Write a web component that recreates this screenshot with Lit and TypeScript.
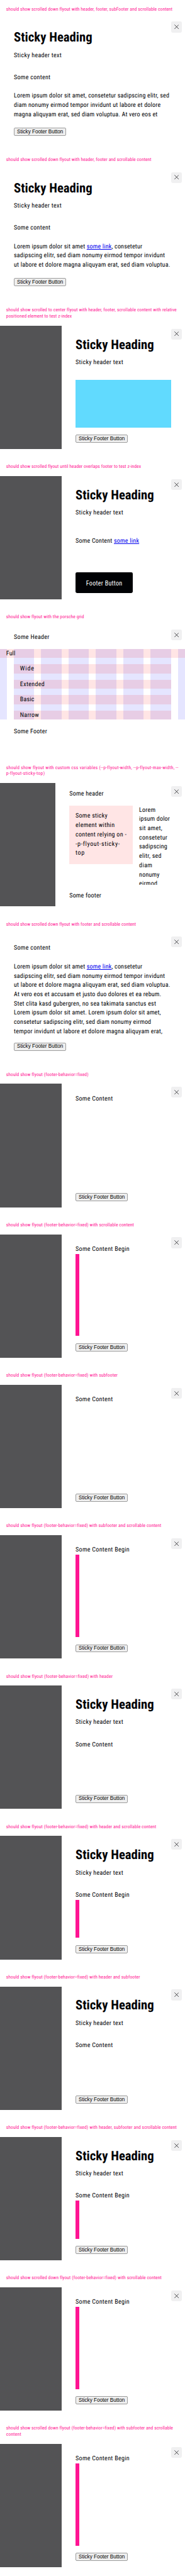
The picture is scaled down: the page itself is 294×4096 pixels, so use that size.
import { LitElement, html, css, svg, unsafeCSS, nothing, TemplateResult } from "lit";
import { customElement } from "lit/decorators.js";
import { classMap } from "lit/directives/class-map.js";

// Design units: the sheet is 480 units wide and 6678 units tall.
const SX = 294 / 480;
const SY = 4096 / 6678;
const x = (n: number) => unsafeCSS(`${(n * SX).toFixed(3)}px`);
const y = (n: number) => unsafeCSS(`${(n * SY).toFixed(3)}px`);

// One line of type, tracked out or in to the given width.
const line = (width: number, content: unknown) =>
  html`<div class="line"><span class="fit" data-w=${width}>${content}</span></div>`;

const link = html`<a class="link">some link</a>`;

interface Story {
  label: [number, string][];
  wide?: boolean;
  narrowBackdrop?: boolean;
  header?: TemplateResult;
  content: TemplateResult;
  footer?: TemplateResult;
}

const heading = html`<div class="header tall">
  <h2 class="heading"><span class="fit" data-w="202.5">Sticky Heading</span></h2>
  ${line(122.7, "Sticky header text")}
</div>`;
const stickyButton = html`<button class="native">Sticky Footer Button</button>`;
const someContent = line(95.5, "Some Content");
const longContent = html`${line(138.8, "Some Content Begin")}<div class="bar"></div>`;

const stories: Story[] = [
  {
    label: [[430, "should show scrolled down flyout with header, footer, subFooter and scrollable content"]],
    wide: true,
    header: heading,
    content: html`${line(93.7, "Some content")}
      <div class="para">
        ${line(402, "Lorem ipsum dolor sit amet, consetetur sadipscing elitr, sed")}
        ${line(379.7, "diam nonumy eirmod tempor invidunt ut labore et dolore")}
        ${line(371.7, "magna aliquyam erat, sed diam voluptua. At vero eos et")}
      </div>`,
  },
  {
    label: [[375.3, "should show scrolled down flyout with header, footer and scrollable content"]],
    wide: true,
    header: heading,
    content: html`${line(93.7, "Some content")}
      <div class="para">
        ${line(332, html`Lorem ipsum dolor sit amet ${link}, consetetur`)}
        ${line(390.7, "sadipscing elitr, sed diam nonumy eirmod tempor invidunt")}
        ${line(404.3, "ut labore et dolore magna aliquyam erat, sed diam voluptua.")}
      </div>`,
  },
  {
    label: [
      [440.5, "should show scrolled to center flyout with header, footer, scrollable content with relative"],
      [169.3, "positioned element to test z-index"],
    ],
    header: heading,
    content: html`<div class="blue"></div>`,
  },
  {
    label: [[348.3, "should show scrolled flyout until header overlaps footer to test z-index"]],
    header: heading,
    content: html`<div class="lowered">${line(163.7, html`Some Content ${link}`)}</div>`,
    footer: html`<div class="footer cta">
      <button class="black"><span class="fit" data-w="92.7">Footer Button</span></button>
    </div>`,
  },
  {
    label: [[200.3, "should show flyout with the porsche grid"]],
    wide: true,
    header: html`<div class="header low">${line(91, "Some Header")}</div>`,
    content: html`<div class="columns">
      <div class="row full">${line(22.7, "Full")}</div>
      <div class="row">${line(35.3, "Wide")}</div>
      <div class="row">${line(62.7, "Extended")}</div>
      <div class="row">${line(36, "Basic")}</div>
      <div class="row">${line(48, "Narrow")}</div>
    </div>`,
    footer: html`<div class="footer early">${line(85, "Some Footer")}</div>`,
  },
  {
    label: [
      [444, "should show flyout with custom css variables (--p-flyout-width, --p-flyout-max-width, --"],
      [98.5, "p-flyout-sticky-top)"],
    ],
    narrowBackdrop: true,
    header: html`<div class="header low">${line(87.7, "Some header")}</div>`,
    content: html`<div class="split">
      <div class="pink">
        ${line(81.7, "Some sticky")} ${line(100.3, "element within")} ${line(131, "content relying on -")}
        ${line(113, "-p-flyout-sticky-")} ${line(22, "top")}
      </div>
      <div class="side">
        ${line(41.3, "Lorem")} ${line(78.7, "ipsum dolor")} ${line(58.7, "sit amet,")} ${line(72, "consetetur")}
        ${line(72, "sadipscing")} ${line(56.7, "elitr, sed")} ${line(33, "diam")} ${line(52, "nonumy")}
        ${line(46, "eirmod")}
      </div>
    </div>`,
    footer: html`<div class="footer words">${line(81.7, "Some footer")}</div>`,
  },
  {
    label: [[335.3, "should show scrolled down flyout with footer and scrollable content"]],
    wide: true,
    content: html`${line(93.7, "Some content")}
      <div class="para">
        ${line(332, html`Lorem ipsum dolor sit amet ${link}, consetetur`)}
        ${line(390.7, "sadipscing elitr, sed diam nonumy eirmod tempor invidunt")}
        ${line(404.3, "ut labore et dolore magna aliquyam erat, sed diam voluptua.")}
        ${line(381.3, "At vero eos et accusam et justo duo dolores et ea rebum.")}
        ${line(367.7, "Stet clita kasd gubergren, no sea takimata sanctus est")}
        ${line(380.3, "Lorem ipsum dolor sit amet. Lorem ipsum dolor sit amet,")}
        ${line(355, "consetetur sadipscing elitr, sed diam nonumy eirmod")}
        ${line(384.3, "tempor invidunt ut labore et dolore magna aliquyam erat,")}
      </div>`,
  },
  { label: [[211.3, "should show flyout (footer-behavior=fixed)"]], content: someContent },
  { label: [[329, "should show flyout (footer-behavior=fixed) with scrollable content"]], content: longContent },
  { label: [[287, "should show flyout (footer-behavior=fixed) with subfooter"]], content: someContent },
  {
    label: [[400, "should show flyout (footer-behavior=fixed) with subfooter and scrollable content"]],
    content: longContent,
  },
  {
    label: [[274, "should show flyout (footer-behavior=fixed) with header"]],
    header: heading,
    content: someContent,
  },
  {
    label: [[387.3, "should show flyout (footer-behavior=fixed) with header and scrollable content"]],
    header: heading,
    content: longContent,
  },
  {
    label: [[345, "should show flyout (footer-behavior=fixed) with header and subfooter"]],
    header: heading,
    content: someContent,
  },
  {
    label: [[440, "should show flyout (footer-behavior=fixed) with header, subfooter and scrollable content"]],
    header: heading,
    content: longContent,
  },
  {
    label: [[401, "should show scrolled down flyout (footer-behavior=fixed) with scrollable content"]],
    content: longContent,
  },
  {
    label: [
      [430.7, "should show scrolled down flyout (footer-behavior=fixed) with subfooter and scrollable"],
      [38, "content"],
    ],
    content: longContent,
  },
];

const cross = svg`<path d="M0.5 0.5 11.5 11.5M11.5 0.5 0.5 11.5" />`;

@customElement("app-root")
export class AppRoot extends LitElement {
  static styles = css`
    :host {
      display: block;
      width: ${x(480)};
      overflow: hidden;
      background: #fff;
      color: #010205;
      font-family: Roboto, "Liberation Sans", sans-serif;
      font-size: ${y(16.4)};
      font-stretch: 87.5%;
      text-rendering: geometricPrecision;
    }
    .line {
      height: ${y(24)};
      line-height: ${y(26.6)};
      white-space: nowrap;
    }
    .fit {
      display: inline-block;
    }
    .label {
      padding: ${y(16)} ${x(16)};
      color: #ff1493;
      font-size: ${y(12.4)};
    }
    .caption {
      height: ${y(16)};
      line-height: ${y(16)};
      white-space: nowrap;
    }
    .flyout {
      position: relative;
      display: flex;
      height: ${y(320)};
      margin-bottom: ${y(22)};
    }
    .backdrop {
      flex: none;
      width: ${x(160)};
      background: #535355;
    }
    .backdrop.slim {
      width: ${x(144)};
    }
    .panel {
      flex: 1;
      min-width: 0;
      display: flex;
      flex-direction: column;
      padding: 0 ${x(36)};
    }
    .close {
      position: absolute;
      top: ${y(8)};
      right: ${x(8)};
      width: ${x(28)};
      height: ${y(28)};
      border-radius: ${x(4)};
      background: #f0f0f1;
      display: grid;
      place-items: center;
    }
    .close svg {
      width: ${x(12)};
      height: ${y(12)};
      fill: none;
      stroke: #010205;
      stroke-width: 1.1;
    }
    .header.tall {
      box-sizing: border-box;
      height: ${y(141)};
      padding-top: ${y(29.2)};
    }
    .header.low {
      box-sizing: border-box;
      height: ${y(58)};
      padding-top: ${y(17)};
    }
    .heading {
      margin: 0 0 ${y(10.3)};
      font-size: ${y(33.8)};
      line-height: ${y(44)};
      font-weight: 700;
      white-space: nowrap;
    }
    .content {
      flex: 1;
      min-height: 0;
      overflow: hidden;
      display: flex;
      flex-direction: column;
    }
    .content.bare {
      padding-top: ${y(26.5)};
    }
    .content.bleed {
      margin: 0 ${x(-36)};
    }
    .para {
      padding-top: ${y(24)};
    }
    .lowered {
      padding-top: ${y(16.5)};
    }
    .bar {
      flex: 1;
      width: ${x(10)};
      background: #ff1493;
    }
    .blue {
      flex: 1;
      background: #61dafe;
    }
    .link {
      color: #0000ee;
      text-decoration: underline;
    }
    .footer {
      flex: none;
      box-sizing: border-box;
      height: ${y(56)};
      padding-top: ${y(19)};
    }
    .footer.cta {
      height: ${y(70)};
      padding-top: 0;
    }
    .footer.early {
      height: ${y(78)};
      padding-top: ${y(18.5)};
    }
    .footer.words {
      padding-top: ${y(17)};
    }
    .native {
      display: block;
      box-sizing: border-box;
      width: ${x(136)};
      height: ${y(21)};
      padding: ${y(1.2)} 0 0;
      border: 1px solid #9c9c9c;
      border-radius: 2px;
      background: #efefef;
      color: #000;
      font: ${y(13.333)} "Liberation Sans", Arial, sans-serif;
      line-height: 1;
      white-space: nowrap;
    }
    .black {
      display: block;
      width: ${x(149)};
      height: ${y(54)};
      padding: ${y(1.5)} 0 0;
      border: 0;
      border-radius: ${x(4)};
      background: #010205;
      color: #fff;
      font: inherit;
      font-stretch: 87.5%;
      white-space: nowrap;
    }
    .columns {
      flex: none;
      display: flex;
      flex-direction: column;
      gap: ${y(16)};
      background:
        linear-gradient(#e5e5ff, #e5e5ff) 0 0 / ${x(18)} 100% no-repeat,
        linear-gradient(#e5e5ff, #e5e5ff) 100% 0 / ${x(18)} 100% no-repeat,
        linear-gradient(#fff, #fff) ${x(18)} 0 / ${x(18)} 100% no-repeat,
        linear-gradient(#fff, #fff) ${x(444)} 0 / ${x(18)} 100% no-repeat,
        repeating-linear-gradient(90deg, #e5e5ff 0 ${x(53)}, #fff ${x(53)} ${x(71)}) ${x(36)} 0;
    }
    .row {
      margin: 0 ${x(36)};
      padding-left: ${x(16)};
      background: rgba(255, 0, 0, 0.1);
    }
    .row.full {
      margin: 0;
    }
    .split {
      display: flex;
      align-items: flex-start;
      gap: ${x(16)};
    }
    .pink {
      box-sizing: border-box;
      flex: none;
      width: ${x(165)};
      padding: ${y(16)} ${x(16)};
      background: #ffe5e5;
    }
    .side {
      flex: 1;
      min-width: 0;
    }
  `;

  // Sets the tracking of every fitted line from its natural width.
  protected firstUpdated() {
    this.renderRoot.querySelectorAll<HTMLElement>(".fit").forEach((el) => {
      const count = (el.textContent ?? "").length;
      const target = (Number(el.dataset.w) + 1) * SX;
      const spacing = (target - el.getBoundingClientRect().width) / (count - 1);
      el.style.letterSpacing = `${spacing.toFixed(4)}px`;
    });
  }

  private story(s: Story) {
    const bleed = !!s.wide && !!s.footer;
    return html`
      <div class="label">
        ${s.label.map(([w, t]) => html`<div class="caption"><span class="fit" data-w=${w}>${t}</span></div>`)}
      </div>
      <div class="flyout">
        ${s.wide ? nothing : html`<div class=${classMap({ backdrop: true, slim: !!s.narrowBackdrop })}></div>`}
        <div class="panel">
          ${s.header ?? nothing}
          <div class=${classMap({ content: true, bare: !s.header, bleed })}>${s.content}</div>
          ${s.footer ?? html`<div class="footer">${stickyButton}</div>`}
        </div>
        <div class="close"><svg viewBox="0 0 12 12" preserveAspectRatio="none">${cross}</svg></div>
      </div>
    `;
  }

  render() {
    return html`${stories.map((s) => this.story(s))}`;
  }
}
